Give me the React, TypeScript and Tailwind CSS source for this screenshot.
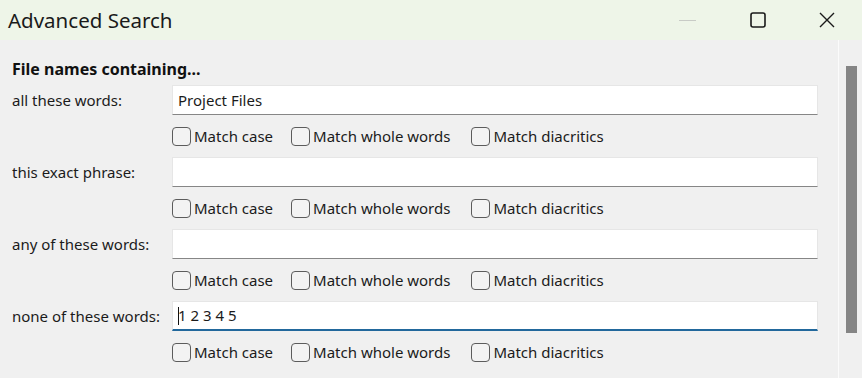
import React from 'react';

const rows = [
  { label: 'all these words:', value: 'Project Files', focused: false },
  { label: 'this exact phrase:', value: '', focused: false },
  { label: 'any of these words:', value: '', focused: false },
  { label: 'none of these words:', value: '1 2 3 4 5', focused: true },
];

// spacing after each option tuned to the original dialog
const options = [
  { label: 'Match case', space: 'mr-[18px]' },
  { label: 'Match whole words', space: 'mr-[21px]' },
  { label: 'Match diacritics', space: '' },
];

const Checkbox: React.FC<{ label: string; className?: string }> = ({ label, className = '' }) => (
  <label className={`flex items-center gap-[3px] ${className}`}>
    <span className="w-[19px] h-[19px] rounded-[4px] border border-[#5c5c5c] bg-[#f3f3f3]" />
    <span className="text-[15px] text-[#1b1b1b]">{label}</span>
  </label>
);

const App: React.FC = () => {
  return (
    <div
      className="w-[862px] h-[378px] overflow-hidden bg-[#f0f0f0] flex flex-col"
      style={{ fontFamily: '"Noto Sans", "Open Sans", sans-serif' }}
    >
      {/* title bar */}
      <div className="h-[40px] bg-[#eef5e8] flex items-center shrink-0">
        <span className="pl-[8px] text-[20.5px] text-[#1a1a1a] flex-1">Advanced Search</span>
        <div className="flex items-center h-full">
          <div className="w-[70px] flex justify-center">
            <span className="block w-[17px] h-[1px] bg-[#c8cbc6]" />
          </div>
          <div className="w-[70px] flex justify-center pl-[2px]">
            <svg width="16" height="16" viewBox="0 0 16 16" fill="none">
              <rect x="1" y="1" width="14" height="14" rx="2" stroke="#1a1a1a" strokeWidth="1.6" />
            </svg>
          </div>
          <div className="w-[70px] flex justify-center">
            <svg width="16" height="16" viewBox="0 0 16 16" fill="none">
              <path d="M1 1L15 15M15 1L1 15" stroke="#1a1a1a" strokeWidth="1.4" />
            </svg>
          </div>
        </div>
      </div>

      <div className="flex flex-1">
        {/* form */}
        <div className="w-[838px] pl-[12px] pt-[19px]">
          <div className="h-[21px] leading-[21px] text-[16px] font-bold text-[#111]">
            File names containing...
          </div>
          <div className="mt-[5px] flex flex-col">
            {rows.map((row) => (
              <div key={row.label} className="flex flex-col">
                <div className="flex items-center h-[30px]">
                  <span className="w-[160px] text-[15px] text-[#1b1b1b]">{row.label}</span>
                  <div
                    className={`w-[646px] h-[30px] bg-white border border-[#e6e6e6] flex items-center pl-[5px] text-[15px] text-[#1b1b1b] ${
                      row.focused ? 'border-b-2 border-b-[#22689c]' : 'border-b-[#868686]'
                    }`}
                  >
                    {row.focused && <span className="w-[1px] h-[18px] bg-[#111] mr-[-1px]" />}
                    {row.value}
                  </div>
                </div>
                <div className="h-[42px] pl-[160px] flex items-center">
                  {options.map((o) => (
                    <Checkbox key={o.label} label={o.label} className={o.space} />
                  ))}
                </div>
              </div>
            ))}
          </div>
        </div>

        {/* scrollbar */}
        <div className="flex-1 border-l border-l-[#fbfbfb] pt-[26px] pl-[7px]">
          <div className="w-[11px] h-[267px] bg-[#858585]" />
        </div>
      </div>
    </div>
  );
};

export default App;
